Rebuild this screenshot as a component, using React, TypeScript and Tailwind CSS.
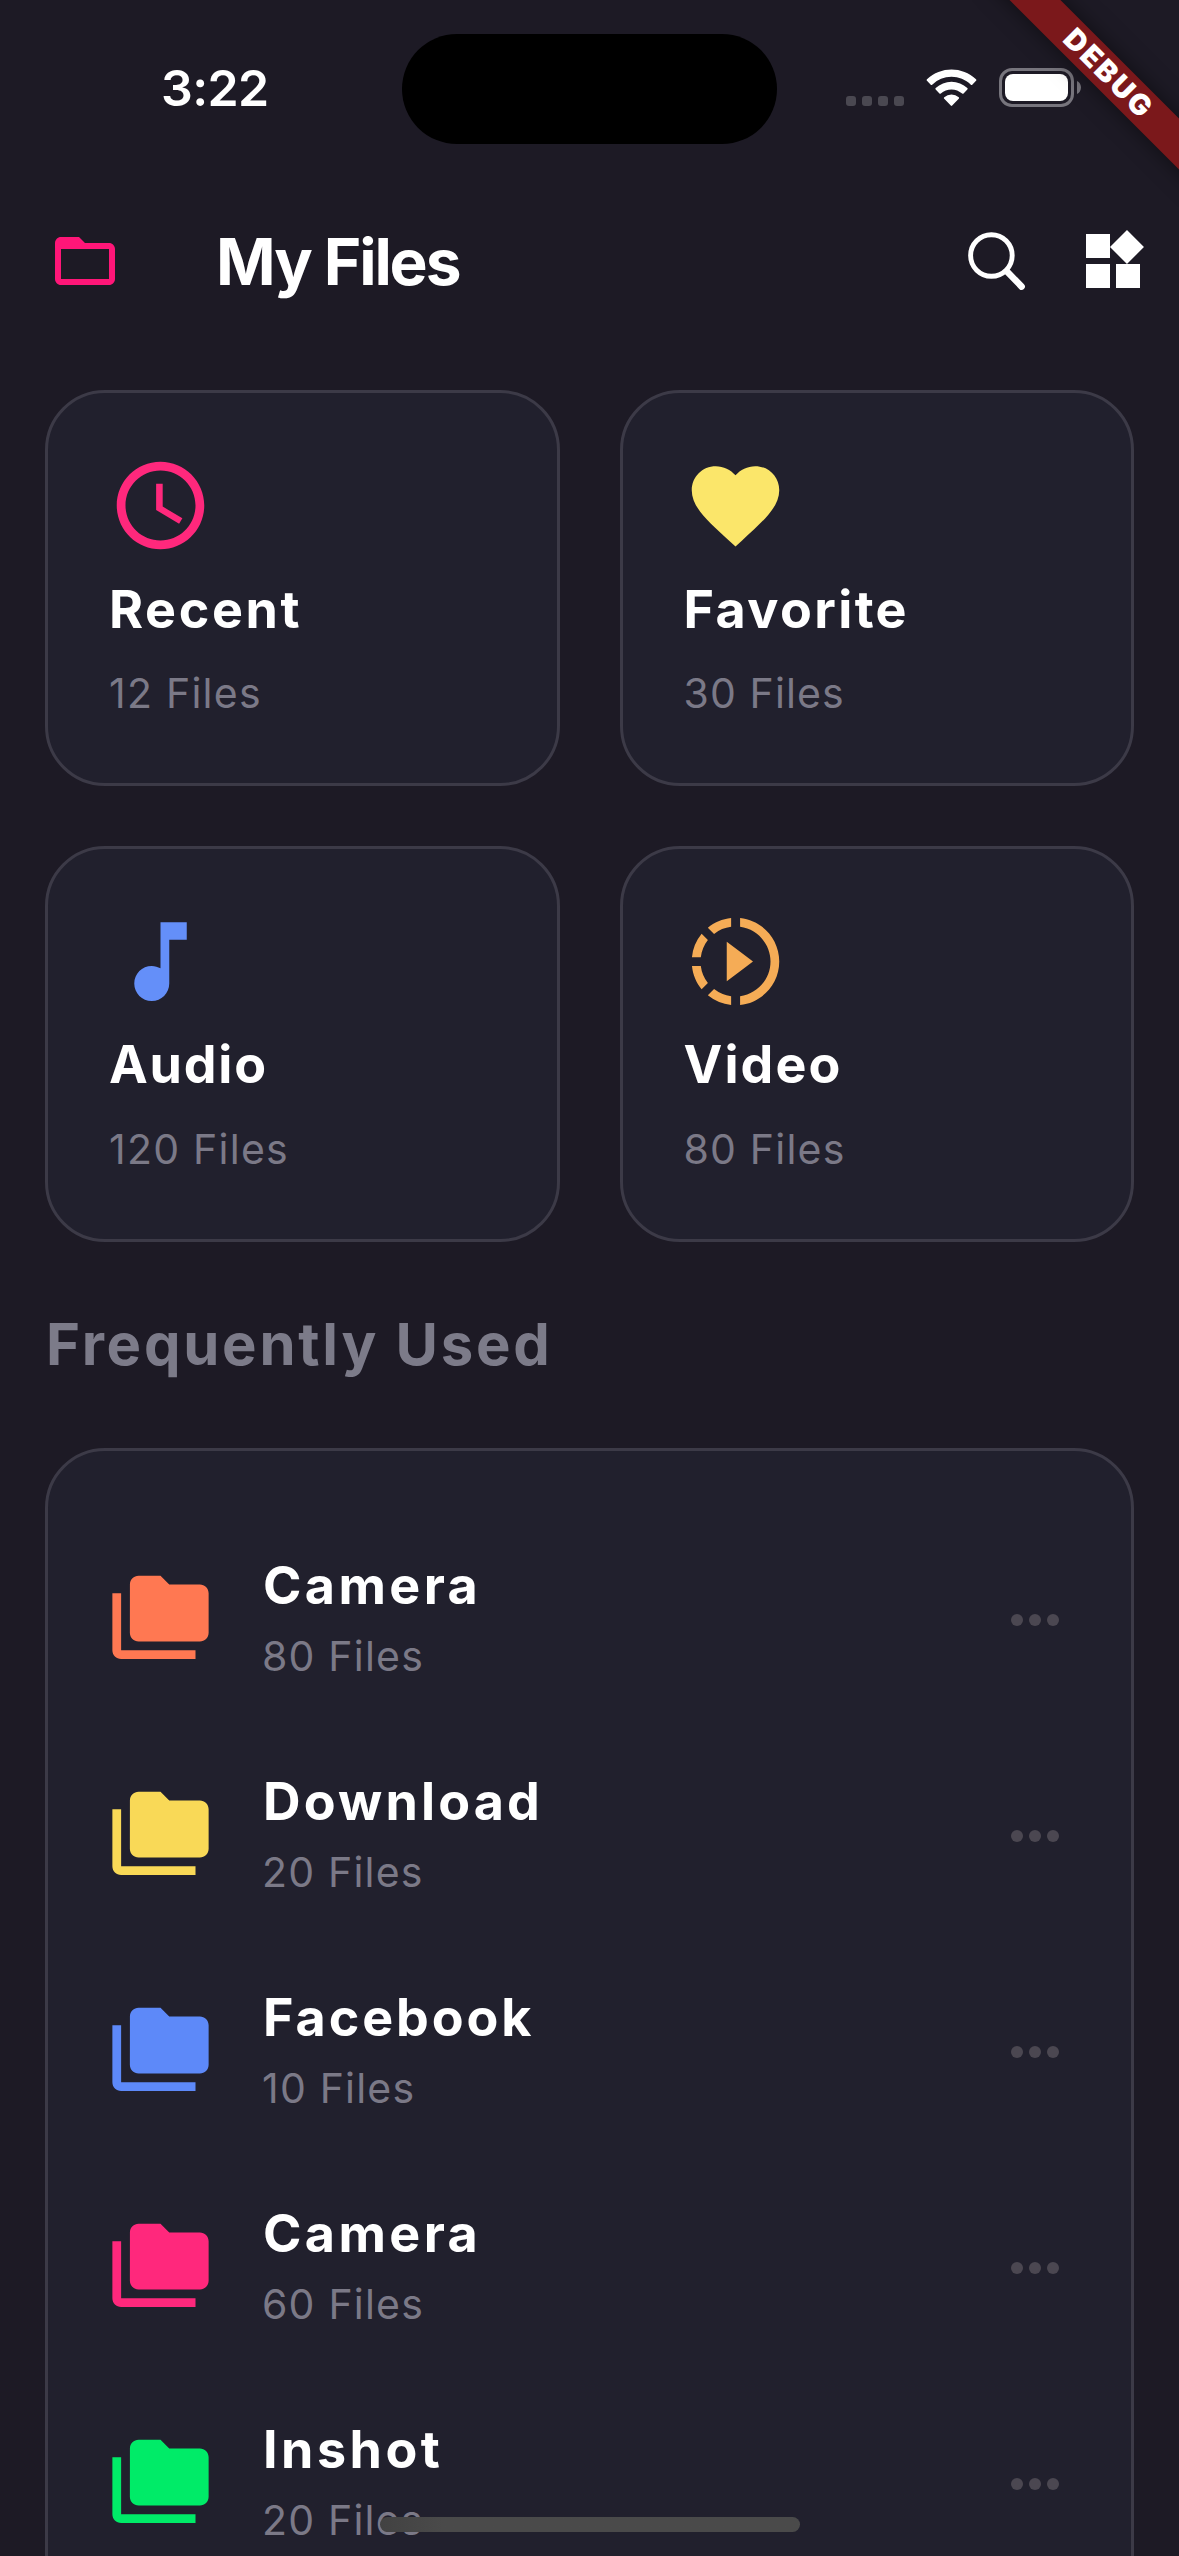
import type { IconType } from 'react-icons';
import {
  MdAccessTime,
  MdFavorite,
  MdFolderCopy,
  MdFolderOpen,
  MdMusicNote,
  MdSlowMotionVideo,
  MdWidgets,
} from 'react-icons/md';

type Category = {
  name: string;
  count: string;
  icon: IconType;
  color: string;
  nameTracking: string;
  countTracking: string;
};

const categories: Category[] = [
  { name: 'Recent', count: '12 Files', icon: MdAccessTime, color: 'text-[#ff287c]', nameTracking: 'tracking-[2.6px]', countTracking: 'tracking-[1.25px]' },
  { name: 'Favorite', count: '30 Files', icon: MdFavorite, color: 'text-[#fbe66a]', nameTracking: 'tracking-[2.4px]', countTracking: 'tracking-[1.13px]' },
  { name: 'Audio', count: '120 Files', icon: MdMusicNote, color: 'text-[#648ff9]', nameTracking: 'tracking-[1.8px]', countTracking: 'tracking-[1.25px]' },
  { name: 'Video', count: '80 Files', icon: MdSlowMotionVideo, color: 'text-[#f5ac56]', nameTracking: 'tracking-[2.1px]', countTracking: 'tracking-[1.2px]' },
];

type Folder = { name: string; count: string; color: string; tracking: string };

const folders: Folder[] = [
  { name: 'Camera', count: '80 Files', color: 'text-[#ff7852]', tracking: 'tracking-[3.4px]' },
  { name: 'Download', count: '20 Files', color: 'text-[#f9d957]', tracking: 'tracking-[3.15px]' },
  { name: 'Facebook', count: '10 Files', color: 'text-[#5d89f9]', tracking: 'tracking-[2.9px]' },
  { name: 'Camera', count: '60 Files', color: 'text-[#ff287c]', tracking: 'tracking-[3.4px]' },
  { name: 'Inshot', count: '20 Files', color: 'text-[#00eb68]', tracking: 'tracking-[3.5px]' },
];

function WifiIcon() {
  return (
    <svg className="h-[37px] w-[51px]" viewBox="0 0 17 12.33" fill="white">
      <path d="M8.5 2.6c2.4 0 4.7.94 6.45 2.62.13.13.34.13.47 0l1.25-1.3a.35.35 0 0 0 0-.5C12.1-.97 4.9-.97.33 3.42a.35.35 0 0 0 0 .5l1.25 1.3c.13.13.34.13.47 0A9.3 9.3 0 0 1 8.5 2.6Z" />
      <path d="M8.5 6.8c1.3 0 2.58.5 3.55 1.38.13.13.34.13.47 0l1.26-1.32a.35.35 0 0 0 0-.5 7.66 7.66 0 0 0-10.55 0 .35.35 0 0 0 0 .5l1.25 1.32c.13.13.34.13.47 0A5.3 5.3 0 0 1 8.5 6.8Z" />
      <path d="M11.02 9.68c0 .1-.04.19-.1.25L8.73 12.2a.32.32 0 0 1-.47 0L6.08 9.93a.36.36 0 0 1 0-.51 3.72 3.72 0 0 1 4.84 0c.07.07.1.16.1.26Z" />
    </svg>
  );
}

function BatteryIcon() {
  return (
    <div className="flex items-center gap-[3px]">
      <div className="h-[39px] w-[75px] rounded-[13px] border-3 border-[#77757d] p-[3px]">
        <div className="h-full w-full rounded-[8px] bg-white" />
      </div>
      <svg className="h-[13px] w-[4px]" viewBox="0 0 4 13" fill="#77757d">
        <path d="M0 0C2.4 1.2 4 3.6 4 6.5S2.4 11.8 0 13Z" />
      </svg>
    </div>
  );
}

function StatusBar() {
  return (
    <div className="flex h-[177px] shrink-0 items-start">
      <div className="w-[402px] pt-[58px] pl-[161px] text-[50px] leading-[60px] font-semibold tracking-[-0.6px]">
        3:22
      </div>
      <div className="mt-[34px] h-[110px] w-[375px] rounded-full bg-black" />
      <div className="mt-[96px] ml-[69px] flex gap-[6px]">
        {[0, 1, 2, 3].map((dot) => (
          <div key={dot} className="h-[10px] w-[10px] rounded-[3px] bg-[#4a4851]" />
        ))}
      </div>
      <div className="mt-[69px] ml-[22px]">
        <WifiIcon />
      </div>
      <div className="mt-[68px] ml-[22px]">
        <BatteryIcon />
      </div>
    </div>
  );
}

function AppBar() {
  return (
    <header className="flex h-[168px] shrink-0 items-center pl-[49px]">
      <MdFolderOpen className="size-[72px] text-[#ff1678]" />
      <h1 className="grow pt-[1px] pl-[95px] text-[64px] leading-[72px] font-bold tracking-[-2.1px]">My Files</h1>
      <svg className="h-[60px] w-[60px]" viewBox="0 0 60 60" fill="none" stroke="white">
        <circle cx="24.4" cy="24.5" r="20.8" strokeWidth="4.9" />
        <path d="M40 40.5 54.6 55.6" strokeWidth="6.6" strokeLinecap="round" />
      </svg>
      <MdWidgets className="mr-[30px] ml-[50px] size-[72px]" />
    </header>
  );
}

function CategoryCard({ category }: { category: Category }) {
  const Icon = category.icon;
  return (
    <div className="h-[395.77px] rounded-[60px] border-3 border-[#3c3a47] bg-[#21202d] p-[60px]">
      <Icon className={`size-[105px] ${category.color}`} />
      <div className={`mt-[19.6px] pl-[1px] text-[52px] leading-[63px] font-bold ${category.nameTracking}`}>
        {category.name}
      </div>
      <div className={`mt-[27.4px] pl-[1px] text-[41px] leading-[50px] text-[#7b7987] ${category.countTracking}`}>
        {category.count}
      </div>
    </div>
  );
}

function FolderRow({ folder }: { folder: Folder }) {
  return (
    <div className="flex h-[216px] items-center pr-[72px] pl-[60px]">
      <MdFolderCopy className={`size-[105px] ${folder.color}`} />
      <div className="mb-[3px] ml-[49px] grow">
        <div className={`pl-[1px] text-[52px] leading-[63px] font-bold ${folder.tracking}`}>{folder.name}</div>
        <div className="mt-[13.5px] text-[41px] leading-[50px] tracking-[1.2px] text-[#7b7987]">{folder.count}</div>
      </div>
      <div className="mt-[2px] flex gap-[6px]">
        {[0, 1, 2].map((dot) => (
          <div key={dot} className="size-[12px] rounded-full bg-[#4b4751]" />
        ))}
      </div>
    </div>
  );
}

export default function App() {
  return (
    <div className="relative flex h-[2556px] w-[1179px] flex-col overflow-hidden bg-[#1d1a25] font-[Inter,sans-serif] text-white">
      <StatusBar />
      <AppBar />

      <main className="flex flex-col px-[45px] pt-[45px]">
        <div className="grid grid-cols-2 gap-[60px]">
          {categories.map((category) => (
            <CategoryCard key={category.name} category={category} />
          ))}
        </div>

        <h2 className="mt-[67.7px] pl-[1px] text-[58px] leading-[70px] font-bold tracking-[2.75px] text-[#7c7b89]">
          Frequently Used
        </h2>

        <div className="mt-[69px] shrink-0 rounded-[60px] border-3 border-[#3c3a47] bg-[#21202d] py-[60px]">
          {folders.map((folder, index) => (
            <FolderRow key={index} folder={folder} />
          ))}
        </div>
      </main>

      {/* Corner ribbon */}
      <div className="absolute top-[54px] left-[957px] flex h-[36px] w-[300px] rotate-45 items-center justify-center bg-[#7b181b] pl-[5px] text-[29px] leading-[36px] font-black tracking-[2.5px] shadow-[0_0_21px_rgba(0,0,0,0.5)]">
        DEBUG
      </div>

      {/* Home indicator */}
      <div className="absolute top-[2517px] left-[380px] h-[15px] w-[420px] rounded-full bg-linear-to-r from-[#424242] to-[#4a4a4a] to-15%" />
    </div>
  );
}
